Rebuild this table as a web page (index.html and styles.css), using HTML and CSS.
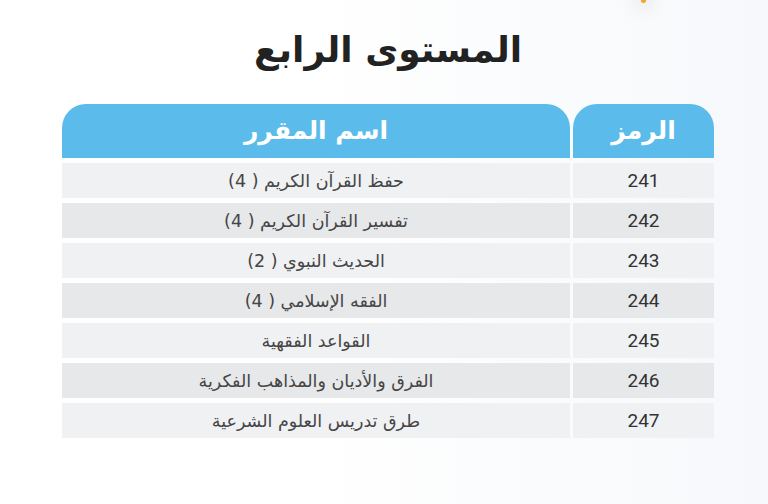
FILE: index.html
```html
<!DOCTYPE html>
<html lang="ar" dir="rtl">
<head>
<meta charset="utf-8">
<link rel="stylesheet" href="styles.css">
</head>
<body>
<div class="page">
  <span class="spark"></span>
  <h1 class="title">المستوى الرابع</h1>
  <div class="table">
    <div class="head code-h">الرمز</div>
    <div class="head name-h">اسم المقرر</div>

    <div class="cell code">241</div><div class="cell name">حفظ القرآن الكريم ( 4)</div>
    <div class="cell code alt">242</div><div class="cell name alt">تفسير القرآن الكريم ( 4)</div>
    <div class="cell code">243</div><div class="cell name">الحديث النبوي ( 2)</div>
    <div class="cell code alt">244</div><div class="cell name alt">الفقه الإسلامي ( 4)</div>
    <div class="cell code">245</div><div class="cell name">القواعد الفقهية</div>
    <div class="cell code alt">246</div><div class="cell name alt">الفرق والأديان والمذاهب الفكرية</div>
    <div class="cell code">247</div><div class="cell name">طرق تدريس العلوم الشرعية</div>
  </div>
</div>
</body>
</html>
```
FILE: styles.css
```css
html, body {
  margin: 0;
  padding: 0;
}
body {
  width: 768px;
  height: 504px;
  overflow: hidden;
  background: linear-gradient(90deg, #ffffff 0%, #ffffff 40%, #f6f8fb 100%);
  font-family: "DejaVu Sans", sans-serif;
}
.page {
  position: relative;
  height: 504px;
  padding-top: 22px;
  box-sizing: border-box;
}
.spark {
  position: absolute;
  left: 641px;
  top: -2px;
  width: 5px;
  height: 5px;
  border-radius: 50%;
  background: #f5a623;
  box-shadow: 0 0 14px 8px rgba(215, 215, 215, 0.3);
}
.title {
  margin: 0;
  text-align: center;
  font-size: 36px;
  font-weight: bold;
  color: #222;
  line-height: 56px;
  padding-left: 8px;
}
.table {
  margin-top: 26px;
  margin-right: 54px;
  width: 652px;
  display: grid;
  grid-template-columns: 141px 508px;
  grid-template-rows: 54px;
  grid-auto-rows: 35px;
  column-gap: 3px;
  row-gap: 5px;
}
.head {
  background: #5bbbea;
  color: #fff;
  font-weight: bold;
  font-size: 25px;
  display: flex;
  align-items: center;
  justify-content: center;
  border-radius: 24px 24px 0 0;
  padding-bottom: 2px;
}
.cell {
  background: #f0f1f3;
  color: #454545;
  font-size: 17.5px;
  display: flex;
  align-items: center;
  justify-content: center;
}
.cell.alt {
  background: #e7e8ea;
}
.code {
  font-family: "Roboto", "DejaVu Sans", sans-serif;
  font-size: 19px;
  font-weight: 400;
  color: #333;
}
```
